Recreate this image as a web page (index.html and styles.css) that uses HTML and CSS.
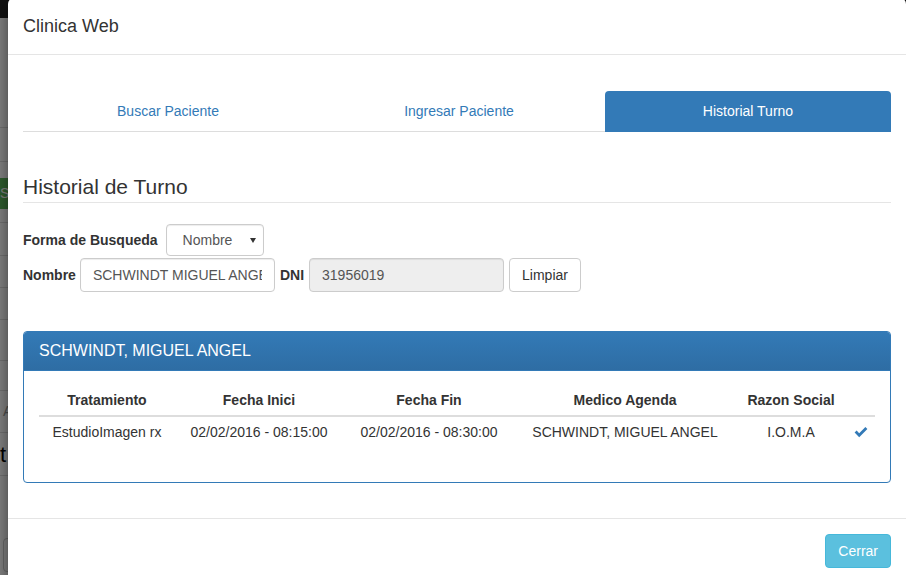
FILE: index.html
```html
<!DOCTYPE html>
<html lang="es">
<head>
<meta charset="utf-8">
<title>Clinica Web</title>
<link rel="stylesheet" href="styles.css">
</head>
<body>
<div class="page">
  <div class="navbar"></div>
  <div class="bg-row h109"></div>
  <div class="bg-row h34"></div>
  <div class="bg-gap16"></div>
  <div class="bg-btn">Se</div>
  <div class="bg-row h14 noline"></div>
  <div class="bg-row h33 top"></div>
  <div class="bg-row h32"></div>
  <div class="bg-row h32"></div>
  <div class="bg-row h41"></div>
  <div class="bg-row h30"></div>
  <div class="bg-row h42 small">A</div>
  <div class="bg-row h43 big">t</div>
  <div class="bg-gap60"></div>
  <div class="bg-outline"></div>
</div>
<div class="backdrop"></div>

<div class="modal">
  <div class="modal-header">
    <h4 class="modal-title">Clinica Web</h4>
  </div>
  <div class="modal-body">
    <ul class="tabs">
      <li><a class="tab">Buscar Paciente</a></li>
      <li><a class="tab">Ingresar Paciente</a></li>
      <li><a class="tab active">Historial Turno</a></li>
    </ul>
    <div class="tab-pane">
      <fieldset class="fs">
        <legend class="legend">Historial de Turno</legend>
        <div class="form-row first">
          <label class="lbl">Forma de Busqueda</label>
          <div class="select"><span class="select-text">Nombre</span><span class="caret"></span></div>
        </div>
        <div class="form-row">
          <label class="lbl tight">Nombre</label>
          <input class="input" type="text" value="SCHWINDT MIGUEL ANGEL">
          <label class="lbl">DNI</label>
          <input class="input readonly" type="text" value="31956019" readonly>
          <button class="btn btn-default">Limpiar</button>
        </div>
      </fieldset>

      <div class="panel">
        <div class="panel-heading">SCHWINDT, MIGUEL ANGEL</div>
        <div class="panel-body">
          <table class="table">
            <thead>
              <tr>
                <th class="c1">Tratamiento</th>
                <th class="c2">Fecha Inici</th>
                <th class="c3">Fecha Fin</th>
                <th class="c4">Medico Agenda</th>
                <th class="c5">Razon Social</th>
                <th class="c6"></th>
              </tr>
            </thead>
            <tbody>
              <tr>
                <td>EstudioImagen rx</td>
                <td>02/02/2016 - 08:15:00</td>
                <td>02/02/2016 - 08:30:00</td>
                <td>SCHWINDT, MIGUEL ANGEL</td>
                <td>I.O.M.A</td>
                <td><svg class="ok" width="14" height="12" viewBox="0 0 14 12"><path d="M0.6 6.6 L2.6 4.6 L5.2 7.2 L11.4 1 L13.4 3 L5.2 11.2 Z" fill="#337ab7"/></svg></td>
              </tr>
            </tbody>
          </table>
        </div>
      </div>
    </div>
  </div>
  <div class="modal-footer">
    <button class="btn btn-info">Cerrar</button>
  </div>
</div>
</body>
</html>
```

FILE: styles.css
```css
* { box-sizing: border-box; }
html, body { margin: 0; padding: 0; }
body {
  width: 906px;
  height: 575px;
  overflow: hidden;
  font-family: "Liberation Sans", Arial, sans-serif;
  font-size: 14px;
  line-height: 20px;
  color: #333;
  background: #fff;
  position: relative;
}

/* background page (under backdrop) */
.page { width: 906px; }
.navbar { height: 18px; background: #222; }
.bg-row { border-bottom: 1px solid #ddd; }
.bg-row.noline { border-bottom: 0; }
.bg-row.top { border-top: 1px solid #ddd; }
.h109 { height: 110px; }
.h34 { height: 34px; }
.h14 { height: 13px; }
.h33 { height: 34px; }
.h32 { height: 32px; }
.h41 { height: 41px; }
.h30 { height: 30px; }
.h42 { height: 42px; }
.h43 { height: 43px; }
.bg-gap16 { height: 16px; }
.bg-gap60 { height: 62px; }
.bg-btn {
  height: 31px;
  background: #5cb85c;
  color: #fff;
  font-size: 14px;
  line-height: 31px;
  padding-left: 0;
}
.small { color: #999; font-size: 14px; padding: 10px 0 0 3px; line-height: 20px; }
.big { color: #000; font-size: 22px; line-height: 43px; padding-left: 0; }
.bg-outline {
  margin-left: 3px;
  width: 60px;
  height: 34px;
  border: 1px solid #ccc;
  border-radius: 4px;
}
.backdrop {
  position: absolute;
  inset: 0;
  background: rgba(0, 0, 0, 0.5);
}

/* modal */
.modal {
  position: absolute;
  left: 8px;
  top: -2px;
  width: 898px;
  background: #fff;
  border-radius: 6px;
  box-shadow: 0 5px 15px rgba(0, 0, 0, 0.5);
}
.modal-header {
  padding: 15px;
  border-bottom: 1px solid #e5e5e5;
}
.modal-title {
  margin: 0;
  font-size: 18px;
  font-weight: 500;
  line-height: 26px;
  color: #333;
}
.modal-body { padding: 15px; }

.tabs {
  list-style: none;
  margin: 21px 0 0;
  padding: 0;
  display: grid;
  grid-template-columns: 290px 292px 286px;
}
.tab {
  display: block;
  text-align: center;
  padding: 10px 15px;
  line-height: 20px;
  color: #337ab7;
  border-bottom: 1px solid #ddd;
  border-radius: 4px 4px 0 0;
  cursor: pointer;
}
.tab.active {
  background: #337ab7;
  color: #fff;
  border-bottom-color: #337ab7;
}

.tab-pane { padding-top: 40px; }
.fs { border: 0; margin: 0; padding: 0; min-width: 0; }
.legend {
  display: block;
  width: 100%;
  padding: 0;
  margin: 0 0 21px;
  font-size: 21px;
  line-height: 30px;
  color: #333;
  border-bottom: 1px solid #e5e5e5;
}
.form-row {
  display: flex;
  align-items: center;
  gap: 5px;
}
.form-row.first { gap: 8px; margin-bottom: 2px; }
.lbl { font-weight: bold; }
.lbl.tight { margin-right: -1px; }
.select {
  position: relative;
  width: 98px;
  height: 32px;
  border: 1px solid #ccc;
  border-radius: 4px;
  padding: 5px 0 0 16px;
  color: #555;
  background: #fff;
  box-shadow: inset 0 1px 1px rgba(0, 0, 0, 0.075);
}
.caret {
  position: absolute;
  right: 7px;
  top: 13px;
  width: 0;
  height: 0;
  border-left: 3.5px solid transparent;
  border-right: 3.5px solid transparent;
  border-top: 5px solid #333;
}
.input {
  width: 195px;
  height: 34px;
  padding: 6px 12px;
  font-family: inherit;
  font-size: 14px;
  line-height: 20px;
  color: #555;
  background: #fff;
  border: 1px solid #ccc;
  border-radius: 4px;
  box-shadow: inset 0 1px 1px rgba(0, 0, 0, 0.075);
  outline: none;
}
.input.readonly { background: #eee; }
.btn {
  font-family: inherit;
  font-size: 14px;
  line-height: 20px;
  padding: 6px 12px;
  border-radius: 4px;
  border: 1px solid #ccc;
  cursor: pointer;
}
.btn-default { background: #fff; color: #333; }
.btn-info { background: #5bc0de; border-color: #46b8da; color: #fff; }

.panel {
  margin-top: 39px;
  margin-bottom: 20px;
  border: 1px solid #337ab7;
  border-radius: 4px;
  overflow: hidden;
}
.panel-heading {
  padding: 10px 15px;
  font-size: 16px;
  line-height: 18px;
  color: #fff;
  background: linear-gradient(to bottom, #337ab7 0%, #2e6da4 100%);
  border-bottom: 1px solid #337ab7;
}
.panel-body { padding: 14px 15px 15px; }
.table {
  width: 100%;
  border-collapse: collapse;
  margin-bottom: 20px;
}
.table th {
  padding: 5px;
  line-height: 20px;
  text-align: center;
  font-weight: bold;
  border-bottom: 2px solid #ddd;
}
.table td {
  padding: 5px;
  line-height: 20px;
  text-align: center;
  border-top: 1px solid #ddd;
}
.c1 { width: 136px; }
.c2 { width: 168px; }
.c3 { width: 172px; }
.c4 { width: 220px; }
.c5 { width: 112px; }
.c6 { width: 28px; }
.ok { display: inline-block; vertical-align: -1px; }

.modal-footer {
  padding: 15px;
  border-top: 1px solid #e5e5e5;
  text-align: right;
}
```
